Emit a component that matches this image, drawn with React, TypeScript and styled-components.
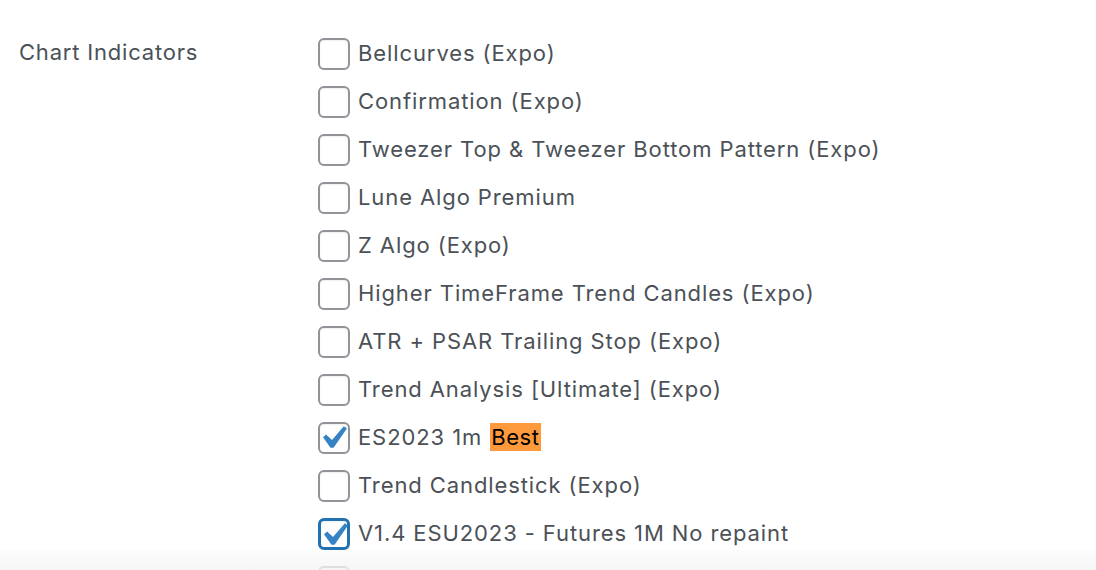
import styled, { createGlobalStyle } from "styled-components";

const GlobalStyle = createGlobalStyle`
  html, body {
    margin: 0;
    padding: 0;
    background: #ffffff;
    overflow: hidden;
  }
  body {
    font-family: Inter, "Noto Sans", "Liberation Sans", sans-serif;
    color: #4b5157;
  }
`;

const indicators = [
  { name: "Bellcurves (Expo)" },
  { name: "Confirmation (Expo)" },
  { name: "Tweezer Top & Tweezer Bottom Pattern (Expo)" },
  { name: "Lune Algo Premium" },
  { name: "Z Algo (Expo)" },
  { name: "Higher TimeFrame Trend Candles (Expo)" },
  { name: "ATR + PSAR Trailing Stop (Expo)" },
  { name: "Trend Analysis [Ultimate] (Expo)" },
  { name: "ES2023 1m", tag: "Best", checked: true },
  { name: "Trend Candlestick (Expo)" },
  { name: "V1.4 ESU2023 - Futures 1M No repaint", checked: true, focused: true },
  { name: "" },
];

const Page = styled.div`
  position: relative;
  height: 570px;
  overflow: hidden;
`;

const FormRow = styled.div`
  display: grid;
  grid-template-columns: 318px 1fr;
  padding-top: 38px;
`;

const RowLabel = styled.div`
  padding-left: 19px;
  font-size: 22px;
  line-height: 28px;
  letter-spacing: 0.8px;
`;

const List = styled.fieldset`
  border: 0;
  margin: 0;
  padding: 0;
  min-width: 0;
  display: flex;
  flex-direction: column;
  gap: 16px;
`;

const Option = styled.label`
  display: flex;
  align-items: center;
  gap: 8px;
  height: 32px;
  font-size: 22px;
  white-space: nowrap;
`;

const Text = styled.span`
  line-height: 28px;
  padding-bottom: 3px;
  letter-spacing: 0.9px;
`;

const Box = styled.span<{ $focused?: boolean }>`
  position: relative;
  flex: none;
  box-sizing: border-box;
  width: 32px;
  height: 32px;
  border-radius: 6px;
  background: #fff;
  border: ${(p) => (p.$focused ? "3px solid #2271b1" : "2px solid #909398")};
  box-shadow: inset 0 1px 2px rgba(0, 0, 0, 0.06);
`;

const Check = styled.svg`
  position: absolute;
  left: -2px;
  top: -2px;
  width: 32px;
  height: 32px;
`;

const Tag = styled.span`
  display: inline-block;
  background: #ff9a3c;
  color: #000;
  padding: 0 1px;
  margin-left: 8px;
  line-height: 28px;
  letter-spacing: 0.6px;
`;

const FooterFade = styled.div`
  position: absolute;
  left: 0;
  right: 0;
  bottom: 0;
  height: 20px;
  background: linear-gradient(to bottom, rgba(246, 246, 246, 0.3), rgba(244, 244, 244, 0.85));
  pointer-events: none;
`;

export default function App() {
  return (
    <Page>
      <GlobalStyle />
      <FormRow>
        <RowLabel>Chart Indicators</RowLabel>
        <List>
          {indicators.map((item, i) => (
            <Option key={i}>
              <Box $focused={item.focused}>
                {item.checked && (
                  <Check viewBox="3.6 3 13.9 13.9">
                    <path
                      d="M14.83 4.89l1.34.94-5.81 8.38H9.02L5.78 9.67l1.34-1.25 2.57 2.4z"
                      fill="#3582c4"
                    />
                  </Check>
                )}
              </Box>
              <Text>
                {item.name}
                {item.tag && <Tag>{item.tag}</Tag>}
              </Text>
            </Option>
          ))}
        </List>
      </FormRow>
      <FooterFade />
    </Page>
  );
}
